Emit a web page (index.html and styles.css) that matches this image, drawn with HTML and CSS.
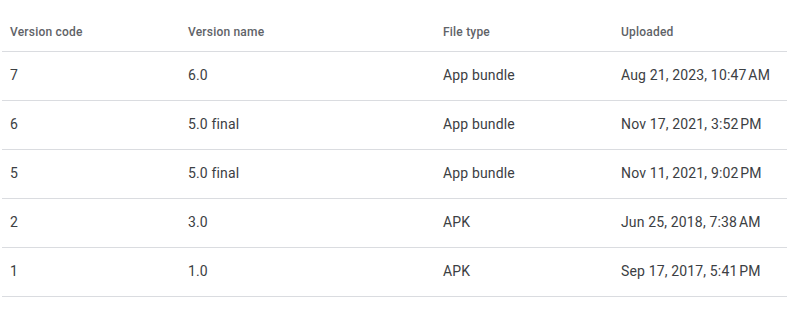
FILE: index.html
```html
<!DOCTYPE html>
<html lang="en">
<head>
  <meta charset="UTF-8">
  <title>App bundle explorer</title>
  <link rel="stylesheet" href="styles.css">
</head>
<body>

<table class="versions">
  <colgroup>
    <col class="colCode">
    <col class="colName">
    <col class="colType">
    <col class="colDate">
  </colgroup>
  <thead>
    <tr>
      <th>Version code</th>
      <th>Version name</th>
      <th>File type</th>
      <th>Uploaded</th>
    </tr>
  </thead>
  <tbody>
    <tr>
      <td>7</td>
      <td>6.0</td>
      <td>App bundle</td>
      <td>Aug 21, 2023, 10:47&#8239;AM</td>
    </tr>
    <tr>
      <td>6</td>
      <td>5.0 final</td>
      <td>App bundle</td>
      <td>Nov 17, 2021, 3:52&#8239;PM</td>
    </tr>
    <tr>
      <td>5</td>
      <td>5.0 final</td>
      <td>App bundle</td>
      <td>Nov 11, 2021, 9:02&#8239;PM</td>
    </tr>
    <tr>
      <td>2</td>
      <td>3.0</td>
      <td>APK</td>
      <td>Jun 25, 2018, 7:38&#8239;AM</td>
    </tr>
    <tr>
      <td>1</td>
      <td>1.0</td>
      <td>APK</td>
      <td>Sep 17, 2017, 5:41&#8239;PM</td>
    </tr>
  </tbody>
</table>

</body>
</html>
```

FILE: styles.css
```css
* {
  padding: 0;
  margin: 0;
  box-sizing: border-box;
}

body {
  font-family: Roboto, 'Liberation Sans', sans-serif;
  background-color: #fff;
  color: #3c4043;
  padding-left: 2px;
}

.versions {
  width: 785px;
  border-collapse: collapse;
  table-layout: fixed;
}

.colCode { width: 178px; }
.colName { width: 255px; }
.colType { width: 178px; }

.versions th {
  height: 51px;
  padding: 0 8px 11px;
  vertical-align: bottom;
  text-align: left;
  font-size: 12px;
  line-height: 16px;
  font-weight: 500;
  letter-spacing: 0.2px;
  color: #5f6368;
  border-bottom: 1px solid #dadce0;
}

.versions td {
  height: 49px;
  padding: 0 8px 2px;
  font-size: 14px;
  line-height: 20px;
  letter-spacing: 0.15px;
  vertical-align: middle;
  white-space: nowrap;
  border-bottom: 1px solid #dadce0;
}
```
